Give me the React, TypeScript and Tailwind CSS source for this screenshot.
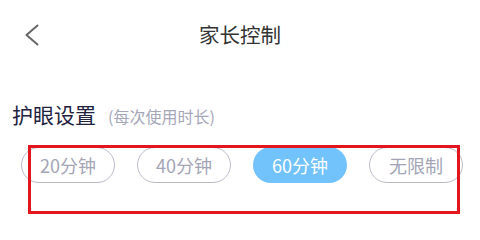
const OPTIONS = ["20分钟", "40分钟", "60分钟", "无限制"];

export default function App() {
  const active = "60分钟";

  return (
    <div
      className="relative w-[480px] h-[240px] bg-white overflow-hidden"
      style={{ fontFamily: '"Noto Sans CJK SC", "Noto Sans", sans-serif' }}
    >
      {/* Header */}
      <div className="relative h-[70px] flex items-center justify-center">
        <svg
          className="absolute left-[24px] top-[24px]"
          width="16"
          height="22"
          viewBox="0 0 16 22"
          fill="none"
          stroke="#666"
          strokeWidth="2"
          strokeLinecap="round"
          strokeLinejoin="round"
        >
          <polyline points="13.5,1.5 2.5,11 13.5,20.5" />
        </svg>
        <h1 className="text-[20.5px] text-[#333] leading-none -mt-[1px]">家长控制</h1>
      </div>

      {/* Eye care */}
      <div className="pl-[12px] pt-[34px] flex items-baseline gap-[12px]">
        <span className="text-[21px] text-[#22223f] leading-none">护眼设置</span>
        <span className="text-[16px] text-[#a5a7b8] leading-none">(每次使用时长)</span>
      </div>

      <div className="pl-[21px] pt-[22px] flex gap-[22px]">
        {OPTIONS.map((o) => (
          <div
            key={o}
            className={`w-[94px] h-[36px] rounded-full flex items-center justify-center text-[18px] ${
              o === active
                ? "bg-[#72c3fb] text-white"
                : "border border-[#b9bbcb] text-[#a3a5b6]"
            }`}
          >
            {o}
          </div>
        ))}
      </div>

      {/* annotation box */}
      <div className="absolute left-[28px] top-[145px] w-[432px] h-[69px] border-[3px] border-[#e3151d]" />
    </div>
  );
}
